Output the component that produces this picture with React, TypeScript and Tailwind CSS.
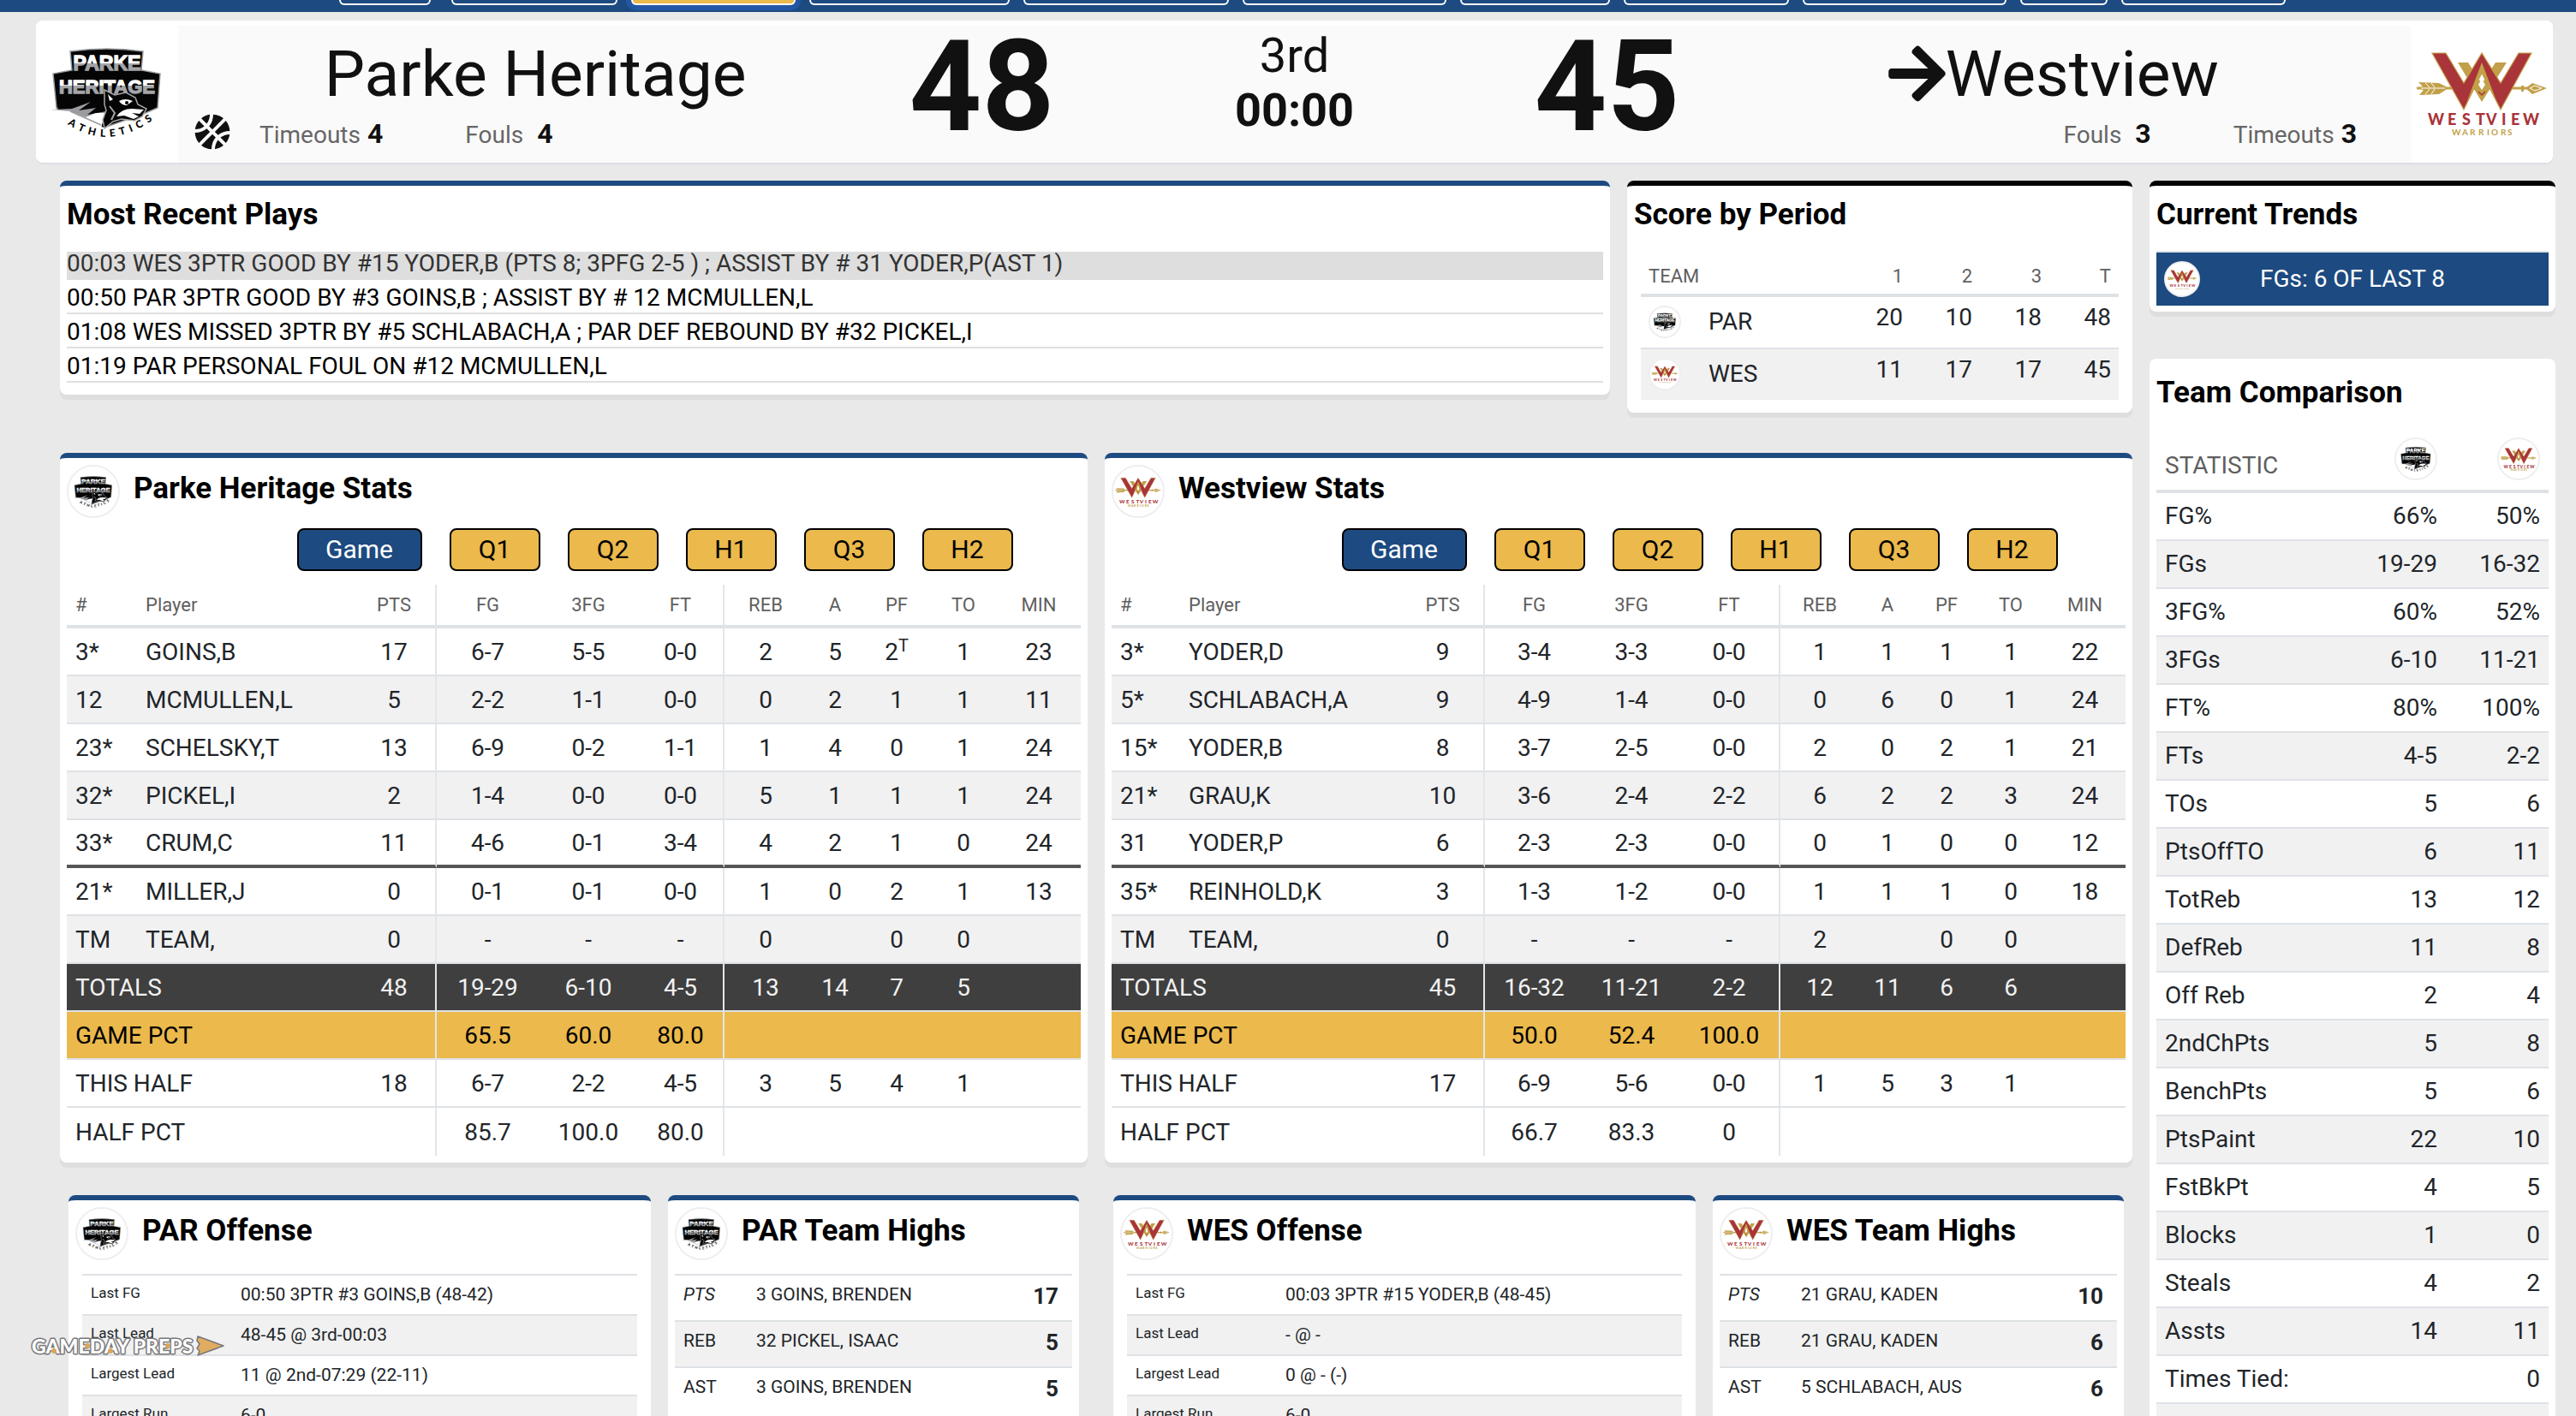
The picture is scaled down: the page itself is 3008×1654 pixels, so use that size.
import React from 'react';
import { FaArrowRight, FaBasketballBall } from 'react-icons/fa';

type Team = 'par' | 'wes';

const ParkeLogo: React.FC = () => (
  <svg viewBox="0 0 166 166" className="block w-full h-full bg-white">
    <defs>
      <linearGradient id="steelTop" x1="0" y1="40" x2="0" y2="60" gradientUnits="userSpaceOnUse">
        <stop offset="0.5" stopColor="#fff" />
        <stop offset="0.5" stopColor="#a3a5a8" />
      </linearGradient>
      <linearGradient id="steelBottom" x1="0" y1="65" x2="0" y2="87" gradientUnits="userSpaceOnUse">
        <stop offset="0.5" stopColor="#fff" />
        <stop offset="0.5" stopColor="#a3a5a8" />
      </linearGradient>
      <path id="athleticsArc" d="M30 116 Q84 158 143 111" />
    </defs>
    <path d="M40 36 Q83 30 125 36 L123 58 L145 62 L142 102 L128 108 L80 125 L24 102 L20 62 L42 58 Z" fill="#050505" stroke="#9a9c9f" strokeWidth="1.5" />
    <path d="M24 103 L60 92 L86 92 L80 125 Z" fill="#050505" />
    <path d="M18 104 L42 103 L64 95 L50 105 L70 102 L60 110 L82 106 L76 125 L60 122 Z" fill="#9a9c9f" />
    <path d="M18 104 L40 106 L58 113 L70 108 L80 108 L76 126 L56 124 Z" fill="#fff" />
    <path d="M40 106 L76 122" stroke="#9a9c9f" strokeWidth="1.5" />
    <text x="83" y="58" textAnchor="middle" fontFamily="'Liberation Sans', sans-serif" fontWeight="700" fontSize="23" fill="url(#steelTop)" stroke="url(#steelTop)" strokeWidth="1.4">PARKE</text>
    <text x="83" y="85" textAnchor="middle" fontFamily="'Liberation Sans', sans-serif" fontWeight="700" fontSize="22" fill="url(#steelBottom)" stroke="url(#steelBottom)" strokeWidth="1.4">HERITAGE</text>
    <path d="M80 81 L92 87 L105 84 L116 90 L119 98 L129 103 L124 112 L115 117 L100 115 L90 118 L80 126 L78 116 L82 105 L80 98 Z" fill="#050505" stroke="#a3a5a8" strokeWidth="1.5" />
    <path d="M84 86 L90 92 L86 94 Z M97 94 Q104 90 113 94 L106 99 Q100 99 97 94 Z" fill="#fff" />
    <path d="M94 112 Q100 103 112 103 L126 104 L121 109 L112 108 L120 112 L114 115 L103 111 Z" fill="#fff" />
    <circle cx="106" cy="96" r="2" fill="#050505" />
    <path d="M86 100 L92 108 L88 116" stroke="#a3a5a8" strokeWidth="2" fill="none" />
    <text fontFamily="Lato, sans-serif" fontWeight="900" fontSize="12" fill="#050505">
      <textPath href="#athleticsArc" startOffset="50%" textAnchor="middle">A&#160; T&#160; H&#160; L&#160; E&#160; T&#160; I&#160; C&#160; S</textPath>
    </text>
  </svg>
);

const WestviewLogo: React.FC = () => (
  <svg viewBox="0 0 166 166" className="block w-full h-full bg-white">
    <path d="M7 79 H52 M118 79 H136" stroke="#c2a04a" strokeWidth="3" />
    <path d="M9 72 L33 73 L41 77 L41 81 L33 86 L10 87 L15 81 L7 79 L14 77 Z" fill="#c2a04a" />
    <path d="M12 79 H40 M17 73 L22 78 M24 73 L28 78 M17 86 L22 80 M24 86 L28 80" stroke="#fff" strokeWidth="1" />
    <path d="M134 79 L142 73 L159 79 L142 86 Z M129 76 H132 V83 H129 Z" fill="#c2a04a" />
    <path d="M139 79 L145 76 L153 79 L145 82 Z" fill="none" stroke="#fff" strokeWidth="1" />
    <path d="M55 49 H67 L83 74 L99 49 H112 L83 95 Z" fill="#c2a04a" />
    <path d="M25 38 H41 L62 73 L83 38 L105 73 L126 38 H141 L105 104 L83 61 L62 104 Z" fill="#a93439" stroke="#c2a04a" strokeWidth="1.2" />
    <path d="M83 49 L65 96 L83 62 L101 96 Z" fill="#c2a04a" />
    <path d="M83 68 L87 75 L83 81 L79 75 Z" fill="#fff" />
    <path d="M79 83 L83 87 L87 83" fill="none" stroke="#a93439" strokeWidth="1.5" />
    <text x="20 43 60 76 88 106 117 131" y="122" fontFamily="Lato, sans-serif" fontWeight="900" fontSize="18" fill="#a93439">WESTVIEW</text>
    <text x="48 60 69 79 89 94 105 113" y="134" fontFamily="Lato, sans-serif" fontWeight="700" fontSize="10" fill="#c2a04a">WARRIORS</text>
  </svg>
);

const TeamLogo: React.FC<{ team: Team; size: string }> = ({ team, size }) => (
  <div className={`${size} shrink-0 rounded-full overflow-hidden border-2 border-[#eeeeef] bg-white`}>
    {team === 'par' ? <ParkeLogo /> : <WestviewLogo />}
  </div>
);

const Card: React.FC<{ border?: string; className?: string; children: React.ReactNode }> = ({ border = '', className = '', children }) => (
  <section className={`bg-white rounded-lg shadow-[0_6px_0_#dedede] ${border} ${className}`}>{children}</section>
);

const BLUE = 'border-t-6 border-[#1d4a80]';
const BLACK = 'border-t-6 border-black';

const CardTitle: React.FC<{ children: React.ReactNode }> = ({ children }) => (
  <h2 className="text-[35px] leading-10 font-bold text-black">{children}</h2>
);

const LogoTitle: React.FC<{ team: Team; children: React.ReactNode }> = ({ team, children }) => (
  <div className="flex items-start gap-4 pt-2">
    <TeamLogo team={team} size="w-[62px] h-[62px]" />
    <h2 className="text-[35px] leading-14 font-bold text-black">{children}</h2>
  </div>
);

const navWidths = [
  'w-[194px]', 'w-[192px]', 'w-[234px]', 'w-[240px]', 'w-[238px]',
  'w-[175px]', 'w-[193px]', 'w-[238px]', 'w-[102px]', 'w-[192px]',
];

const NavBar: React.FC = () => (
  <nav className="h-[14px] bg-[#1d4a80] flex items-start pl-[396px] gap-4 overflow-hidden">
    <button className="w-[107px] h-[6px] mr-2 border-2 border-t-0 border-white rounded-b-lg" />
    {navWidths.map((w, i) => (
      <button
        key={i}
        className={`${w} h-[6px] border-2 border-t-0 border-white rounded-b-lg ${i === 1 ? 'bg-[#ebb94c] shadow-[0_0_0_6px_#2357a5]' : ''}`}
      />
    ))}
  </nav>
);

const Counter: React.FC<{ label: string; value: number; gap: string }> = ({ label, value, gap }) => (
  <div className={`flex items-baseline ${gap}`}>
    <span className="text-[28px] text-[#666]">{label}</span>
    <span className="text-[32px] font-bold">{value}</span>
  </div>
);

const Scoreboard: React.FC = () => (
  <header className="ml-[42px] mr-[27px] mt-[10px] flex bg-white rounded-lg overflow-hidden shadow-[0_2px_0_#dddfe5] text-[#111]">
    <div className="w-[166px] h-[166px] shrink-0"><ParkeLogo /></div>
    <div className="flex-1 mt-[6px] bg-[#fafafa] grid grid-cols-[8fr_2fr_5fr_2fr_8fr]">
      <div className="pt-4">
        <h1 className="text-[75px] leading-20 text-center">Parke Heritage</h1>
        <div className="flex items-start pl-[19px] pt-[7px] leading-[46px]">
          <FaBasketballBall className="w-[42px] h-[42px] mr-[34px]" />
          <Counter label="Timeouts" value={4} gap="gap-2" />
          <div className="w-24" />
          <Counter label="Fouls" value={4} gap="gap-4" />
        </div>
      </div>
      <div className="text-[148px] leading-36 font-bold text-center">48</div>
      <div className="pt-[3px] text-center leading-16">
        <div className="text-[56px] leading-16">3rd</div>
        <div className="text-[54px] leading-16 font-bold">00:00</div>
      </div>
      <div className="text-[148px] leading-36 font-bold text-center">45</div>
      <div className="pt-4">
        <h1 className="flex justify-center items-center text-[75px] leading-20">
          <FaArrowRight className="w-[67px] h-[76px]" />
          Westview
        </h1>
        <div className="flex items-start justify-end pr-[63px] pt-[7px] leading-[46px]">
          <Counter label="Fouls" value={3} gap="gap-4" />
          <div className="w-24" />
          <Counter label="Timeouts" value={3} gap="gap-2" />
        </div>
      </div>
    </div>
    <div className="w-[166px] h-[166px] shrink-0"><WestviewLogo /></div>
  </header>
);

const plays = [
  '00:03 WES 3PTR GOOD BY #15 YODER,B (PTS 8; 3PFG 2-5 ) ; ASSIST BY # 31 YODER,P(AST 1)',
  '00:50 PAR 3PTR GOOD BY #3 GOINS,B ; ASSIST BY # 12 MCMULLEN,L',
  '01:08 WES MISSED 3PTR BY #5 SCHLABACH,A ; PAR DEF REBOUND BY #32 PICKEL,I',
  '01:19 PAR PERSONAL FOUL ON #12 MCMULLEN,L',
];

const RecentPlays: React.FC = () => (
  <Card border={BLUE} className="px-2 pt-[14px] pb-[14px]">
    <CardTitle>Most Recent Plays</CardTitle>
    <ul className="mt-[23px] text-[28px] leading-7 text-black">
      {plays.map((play, i) => (
        <li key={i} className={i === 0 ? 'bg-[#dedede] text-[#333] pb-[5px]' : 'pt-[7px] pb-[3px] border-b-2 border-[#e0e0e1]'}>
          {play}
        </li>
      ))}
    </ul>
  </Card>
);

const periods: { team: Team; name: string; scores: number[] }[] = [
  { team: 'par', name: 'PAR', scores: [20, 10, 18, 48] },
  { team: 'wes', name: 'WES', scores: [11, 17, 17, 45] },
];

const ScoreByPeriod: React.FC = () => (
  <Card border={BLACK} className="px-2 pt-[14px] pb-[15px]">
    <CardTitle>Score by Period</CardTitle>
    <div className="px-2 pt-7">
      <table className="w-full border-separate border-spacing-0">
        <thead>
          <tr className="text-[22px] leading-7 text-[#5f5f5f]">
            <th className="font-normal text-left pl-[9px] pt-[10px] pb-[6px] border-b-4 border-[#dee2e6]">TEAM</th>
            {['1', '2', '3', 'T'].map((p) => (
              <th key={p} className="font-normal text-right w-[81px] pr-[9px] pt-[10px] pb-[6px] border-b-4 border-[#dee2e6]">{p}</th>
            ))}
          </tr>
        </thead>
        <tbody className="text-[28px] leading-7">
          {periods.map((row, i) => (
            <tr key={row.name} className={i === 1 ? 'bg-[#f1f1f1]' : ''}>
              <td className={`pl-[9px] pt-[10px] pb-[11px] ${i === 0 ? 'border-b-2 border-[#dee2e6]' : ''}`}>
                <div className="flex items-center gap-8">
                  <TeamLogo team={row.team} size="w-[38px] h-[38px]" />
                  {row.name}
                </div>
              </td>
              {row.scores.map((s, j) => (
                <td key={j} className={`text-right align-top pt-[10px] pr-[9px] ${i === 0 ? 'border-b-2 border-[#dee2e6]' : ''}`}>{s}</td>
              ))}
            </tr>
          ))}
        </tbody>
      </table>
    </div>
  </Card>
);

const statHeads = ['#', 'Player', 'PTS', 'FG', '3FG', 'FT', 'REB', 'A', 'PF', 'TO', 'MIN'];

const parStats = [
  ['3*', 'GOINS,B', '17', '6-7', '5-5', '0-0', '2', '5', '2T', '1', '23'],
  ['12', 'MCMULLEN,L', '5', '2-2', '1-1', '0-0', '0', '2', '1', '1', '11'],
  ['23*', 'SCHELSKY,T', '13', '6-9', '0-2', '1-1', '1', '4', '0', '1', '24'],
  ['32*', 'PICKEL,I', '2', '1-4', '0-0', '0-0', '5', '1', '1', '1', '24'],
  ['33*', 'CRUM,C', '11', '4-6', '0-1', '3-4', '4', '2', '1', '0', '24'],
  ['21*', 'MILLER,J', '0', '0-1', '0-1', '0-0', '1', '0', '2', '1', '13'],
  ['TM', 'TEAM,', '0', '-', '-', '-', '0', '', '0', '0', ''],
];

const parTotals = [
  ['TOTALS', '48', '19-29', '6-10', '4-5', '13', '14', '7', '5', ''],
  ['GAME PCT', '', '65.5', '60.0', '80.0', '', '', '', '', ''],
  ['THIS HALF', '18', '6-7', '2-2', '4-5', '3', '5', '4', '1', ''],
  ['HALF PCT', '', '85.7', '100.0', '80.0', '', '', '', '', ''],
];

const wesStats = [
  ['3*', 'YODER,D', '9', '3-4', '3-3', '0-0', '1', '1', '1', '1', '22'],
  ['5*', 'SCHLABACH,A', '9', '4-9', '1-4', '0-0', '0', '6', '0', '1', '24'],
  ['15*', 'YODER,B', '8', '3-7', '2-5', '0-0', '2', '0', '2', '1', '21'],
  ['21*', 'GRAU,K', '10', '3-6', '2-4', '2-2', '6', '2', '2', '3', '24'],
  ['31', 'YODER,P', '6', '2-3', '2-3', '0-0', '0', '1', '0', '0', '12'],
  ['35*', 'REINHOLD,K', '3', '1-3', '1-2', '0-0', '1', '1', '1', '0', '18'],
  ['TM', 'TEAM,', '0', '-', '-', '-', '2', '', '0', '0', ''],
];

const wesTotals = [
  ['TOTALS', '45', '16-32', '11-21', '2-2', '12', '11', '6', '6', ''],
  ['GAME PCT', '', '50.0', '52.4', '100.0', '', '', '', '', ''],
  ['THIS HALF', '17', '6-9', '5-6', '0-0', '1', '5', '3', '1', ''],
  ['HALF PCT', '', '66.7', '83.3', '0', '', '', '', '', ''],
];

const parCols = [
  'w-[82px]', 'w-[252px]', 'w-[98px]', 'w-[119px]', 'w-[116px]', 'w-[101px]',
  'w-[96px]', 'w-[66px]', 'w-[78px]', 'w-[78px]', 'w-[98px]',
];

const wesCols = [
  'w-[80px]', 'w-[259px]', 'w-[97px]', 'w-[115px]', 'w-[112px]', 'w-[118px]',
  'w-[92px]', 'w-[66px]', 'w-[72px]', 'w-[78px]', 'w-[95px]',
];

const rowStyles = ['', 'bg-[#f1f1f2]', '', 'bg-[#f1f1f2]', '', '', 'bg-[#f1f1f2]'];
const totalRowStyles = ['bg-[#3f3f3f] text-[#f1f1f1]', 'bg-[#ebb94c] text-black', '', ''];

// PTS and FT close off a group of columns
const divider = (col: number) => (col === 2 || col === 5 ? 'border-r-2 border-r-[#e3e6e9]' : '');

interface StatsProps {
  team: Team;
  title: string;
  rows: string[][];
  totals: string[][];
  cols: string[];
}

const TeamStats: React.FC<StatsProps> = ({ team, title, rows, totals, cols }) => (
  <Card border={BLUE} className="px-2 pb-2">
    <LogoTitle team={team}>{title}</LogoTitle>
    <div className="flex justify-center gap-8 pl-[189px] pt-3 text-[30px] leading-8">
      {['Game', 'Q1', 'Q2', 'H1', 'Q3', 'H2'].map((tab, i) => (
        <button
          key={tab}
          className={`h-[50px] rounded-lg border-2 border-black ${i === 0 ? 'w-[146px] bg-[#1d4a80] text-white' : 'w-[106px] bg-[#ebb94c] text-black'}`}
        >
          {tab}
        </button>
      ))}
    </div>
    <table className="w-full table-fixed border-separate border-spacing-0 mt-4 text-[28px] leading-7">
      <colgroup>
        {cols.map((c, i) => <col key={i} className={c} />)}
      </colgroup>
      <thead>
        <tr className="text-[22px] text-[#5f5f5f]">
          {statHeads.map((h, i) => (
            <th key={h} className={`h-[51px] font-normal border-b-4 border-b-[#dee2e6] ${i < 2 ? 'text-left pl-[10px]' : 'text-center'} ${divider(i)}`}>{h}</th>
          ))}
        </tr>
      </thead>
      <tbody>
        {rows.map((row, r) => (
          <tr key={r} className={rowStyles[r]}>
            {row.map((cell, i) => (
              <td
                key={i}
                className={`h-14 pt-px ${r === 4 ? 'border-b-4 border-b-[#555]' : 'border-b-2 border-b-[#dee2e6]'} ${i < 2 ? 'text-left pl-[10px]' : 'text-center'} ${divider(i)}`}
              >
                {cell === '2T' ? <>2<sup className="text-[20px]">T</sup></> : cell}
              </td>
            ))}
          </tr>
        ))}
        {totals.map((row, r) => (
          <tr key={row[0]} className={totalRowStyles[r]}>
            {row.map((cell, i) => (
              <td
                key={i}
                colSpan={i === 0 ? 2 : 1}
                className={`h-14 pt-0.5 ${r < 3 ? 'border-b-2 border-b-[#dee2e6]' : ''} ${i === 0 ? 'text-left pl-[10px]' : 'text-center'} ${divider(i + 1)}`}
              >
                {cell}
              </td>
            ))}
          </tr>
        ))}
      </tbody>
    </table>
  </Card>
);

const Offense: React.FC<{ team: Team; title: string; rows: string[][] }> = ({ team, title, rows }) => (
  <Card border={BLUE} className="px-2 pb-10">
    <LogoTitle team={team}>{title}</LogoTitle>
    <div className="px-2 pt-4">
      <table className="w-full border-separate border-spacing-0 border-t-2 border-[#dee2e6]">
        <tbody>
          {rows.map(([label, value], i) => (
            <tr key={label} className={i % 2 === 1 ? 'bg-[#f1f1f1]' : ''}>
              <td className="h-[47px] w-[175px] pl-[10px] pt-2 align-top text-[17px] leading-6 border-b-2 border-[#dee2e6]">{label}</td>
              <td className="pl-[10px] pt-2 align-top text-[21px] leading-7 border-b-2 border-[#dee2e6]">{value}</td>
            </tr>
          ))}
        </tbody>
      </table>
    </div>
  </Card>
);

const TeamHighs: React.FC<{ team: Team; title: string; rows: string[][] }> = ({ team, title, rows }) => (
  <Card border={BLUE} className="px-2 pb-10">
    <LogoTitle team={team}>{title}</LogoTitle>
    <div className="pt-4">
      <table className="w-full border-separate border-spacing-0 border-t-2 border-[#dee2e6] text-[21px] leading-7">
        <tbody>
          {rows.map(([label, player, value], i) => {
            const line = i < 2 ? 'border-b-2 border-[#dee2e6]' : '';
            return (
              <tr key={label} className={i % 2 === 1 ? 'bg-[#f1f1f1]' : ''}>
                <td className={`h-[54px] w-[85px] pl-[10px] pt-2 align-top ${i === 0 ? 'italic' : ''} ${line}`}>{label}</td>
                <td className={`pl-[10px] pt-2 align-top ${line}`}>{player}</td>
                <td className={`pr-4 pt-2 align-top text-right text-[26px] leading-8 font-bold ${line}`}>{value}</td>
              </tr>
            );
          })}
        </tbody>
      </table>
    </div>
  </Card>
);

const CurrentTrends: React.FC = () => (
  <Card border={BLACK} className="px-2 pt-[14px] pb-[7px]">
    <CardTitle>Current Trends</CardTitle>
    <div className="mt-[22px] h-16 border-t-2 border-[#dee2e6] bg-[#1d4a80] grid grid-cols-[1fr_auto_1fr] items-center px-[9px] text-[28px] text-white">
      <TeamLogo team="wes" size="w-[42px] h-[42px]" />
      <span>FGs: 6 OF LAST 8</span>
    </div>
  </Card>
);

const comparison = [
  ['FG%', '66%', '50%'],
  ['FGs', '19-29', '16-32'],
  ['3FG%', '60%', '52%'],
  ['3FGs', '6-10', '11-21'],
  ['FT%', '80%', '100%'],
  ['FTs', '4-5', '2-2'],
  ['TOs', '5', '6'],
  ['PtsOffTO', '6', '11'],
  ['TotReb', '13', '12'],
  ['DefReb', '11', '8'],
  ['Off Reb', '2', '4'],
  ['2ndChPts', '5', '8'],
  ['BenchPts', '5', '6'],
  ['PtsPaint', '22', '10'],
  ['FstBkPt', '4', '5'],
  ['Blocks', '1', '0'],
  ['Steals', '4', '2'],
  ['Assts', '14', '11'],
  ['Times Tied:', '', '0'],
  ['', '', ''],
];

const TeamComparison: React.FC = () => (
  <Card className="px-2 pt-5 pb-10">
    <CardTitle>Team Comparison</CardTitle>
    <table className="w-full mt-8 border-separate border-spacing-0 text-[28px] leading-7">
      <thead>
        <tr className="text-[#5f5f5f]">
          <th className="font-normal text-left align-bottom pl-[10px] pb-[14px] border-b-4 border-[#dee2e6]">STATISTIC</th>
          {(['par', 'wes'] as Team[]).map((t) => (
            <th key={t} className="w-[120px] pr-[10px] pb-[11px] border-b-4 border-[#dee2e6]">
              <div className="flex justify-end"><TeamLogo team={t} size="w-[50px] h-[50px]" /></div>
            </th>
          ))}
        </tr>
      </thead>
      <tbody>
        {comparison.map(([label, par, wes], i) => (
          <tr key={label} className={i % 2 === 1 ? 'bg-[#f1f1f2]' : ''}>
            <td className="h-14 pl-[10px] border-b-2 border-[#dee2e6]">{label}</td>
            <td className="text-right pr-[10px] border-b-2 border-[#dee2e6]">{par}</td>
            <td className="text-right pr-[10px] border-b-2 border-[#dee2e6]">{wes}</td>
          </tr>
        ))}
      </tbody>
    </table>
  </Card>
);

const Watermark: React.FC = () => (
  <svg viewBox="0 0 228 28" className="absolute left-[36px] bottom-[68px] w-[228px] h-[28px]">
    <text x="1" y="23" fontFamily="Lato, sans-serif" fontWeight="900" fontSize="23" fill="#fff" stroke="#77787a" strokeWidth="3" strokeLinejoin="round" paintOrder="stroke">GAMEDAY PREPS</text>
    <g fill="#d9a65c">
      <circle cx="27" cy="20" r="3" />
      <circle cx="66" cy="14" r="3" />
      <circle cx="93" cy="20" r="3" />
      <circle cx="160" cy="14" r="3" />
    </g>
    <path d="M195 3 L225 14 L195 25 L197 20 L194 17 L197 12 L194 8 Z" fill="#e0ac62" stroke="#77787a" strokeWidth="1.5" strokeLinejoin="round" />
  </svg>
);

const App: React.FC = () => (
  <div className="relative h-screen overflow-hidden bg-[#e9e9e9] text-[#212529] font-[Roboto,sans-serif]">
    <NavBar />
    <Scoreboard />
    <main className="grid grid-cols-[1fr_474px] gap-5 pl-[70px] pr-[24px] pt-[21px]">
      <div>
        <div className="grid grid-cols-[1fr_590px] gap-5 items-start">
          <RecentPlays />
          <ScoreByPeriod />
        </div>
        <div className="grid grid-cols-2 gap-5 mt-[47px]">
          <TeamStats team="par" title="Parke Heritage Stats" rows={parStats} totals={parTotals} cols={parCols} />
          <TeamStats team="wes" title="Westview Stats" rows={wesStats} totals={wesTotals} cols={wesCols} />
        </div>
        <div className="grid grid-cols-2 gap-5 mt-[38px]">
          <div className="grid grid-cols-[17fr_12fr] gap-5 px-[10px]">
            <Offense
              team="par"
              title="PAR Offense"
              rows={[
                ['Last FG', '00:50 3PTR #3 GOINS,B (48-42)'],
                ['Last Lead', '48-45 @ 3rd-00:03'],
                ['Largest Lead', '11 @ 2nd-07:29 (22-11)'],
                ['Largest Run', '6-0'],
              ]}
            />
            <TeamHighs
              team="par"
              title="PAR Team Highs"
              rows={[['PTS', '3 GOINS, BRENDEN', '17'], ['REB', '32 PICKEL, ISAAC', '5'], ['AST', '3 GOINS, BRENDEN', '5']]}
            />
          </div>
          <div className="grid grid-cols-[17fr_12fr] gap-5 px-[10px]">
            <Offense
              team="wes"
              title="WES Offense"
              rows={[
                ['Last FG', '00:03 3PTR #15 YODER,B (48-45)'],
                ['Last Lead', '- @ -'],
                ['Largest Lead', '0 @ - (-)'],
                ['Largest Run', '6-0'],
              ]}
            />
            <TeamHighs
              team="wes"
              title="WES Team Highs"
              rows={[['PTS', '21 GRAU, KADEN', '10'], ['REB', '21 GRAU, KADEN', '6'], ['AST', '5 SCHLABACH, AUS', '6']]}
            />
          </div>
        </div>
      </div>
      <div className="flex flex-col gap-[55px]">
        <CurrentTrends />
        <TeamComparison />
      </div>
    </main>
    <Watermark />
  </div>
);

export default App;
